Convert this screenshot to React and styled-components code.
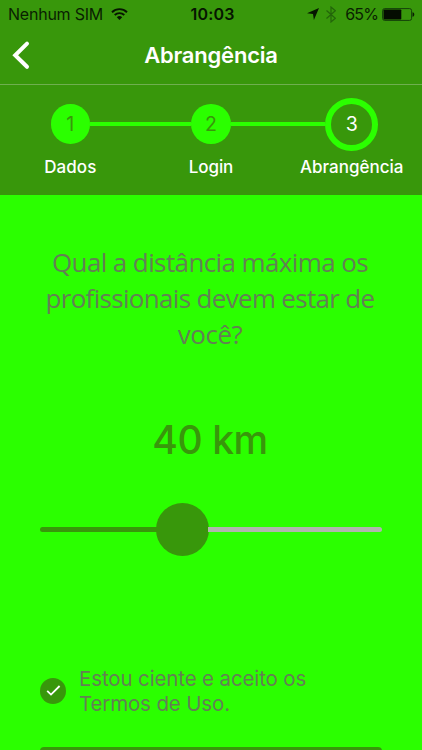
import React from "react";
import styled, { createGlobalStyle } from "styled-components";

const DARK = "#38970b";
const BRIGHT = "#2bff00";
const GREY = "#647f55";

const GlobalStyle = createGlobalStyle`
  * { box-sizing: border-box; }
  html, body { margin: 0; padding: 0; background: ${BRIGHT}; overflow: hidden; }
`;

const Screen = styled.div`
  width: 422px;
  height: 750px;
  overflow: hidden;
  display: flex;
  flex-direction: column;
  background: ${BRIGHT};
  font-family: Inter, "Liberation Sans", sans-serif;
`;

const StatusBar = styled.div`
  height: 28px;
  flex: none;
  display: grid;
  grid-template-columns: 1fr auto 1fr;
  align-items: center;
  padding: 0 7px 0 8px;
  background: ${DARK};
  color: #0a1f02;
  font-size: 16px;
  line-height: 28px;
  white-space: nowrap;
`;

const Carrier = styled.div`
  display: flex;
  align-items: center;
  gap: 8px;
  letter-spacing: -0.23px;
`;

const Clock = styled.div`
  padding-left: 2px;
  color: #061501;
  font-weight: 600;
  letter-spacing: 0.2px;
`;

const Indicators = styled.div`
  display: flex;
  align-items: center;
  justify-content: flex-end;
`;

const ArrowIcon = styled.svg`
  margin-right: 7px;
`;

const BluetoothIcon = styled.svg`
  margin-right: 9px;
`;

const Percent = styled.span`
  margin-right: 4px;
  letter-spacing: -0.9px;
`;

const NavBar = styled.header`
  height: 57px;
  flex: none;
  display: grid;
  grid-template-columns: 48px 1fr 48px;
  align-items: center;
  background: ${DARK};
  border-bottom: 1px solid #6faf50;
`;

const BackButton = styled.button`
  display: flex;
  padding: 0 0 2px 11px;
  border: 0;
  background: none;
`;

const Title = styled.h1`
  margin: 0 0 2px;
  color: #fff;
  text-align: center;
  font-size: 22px;
  font-weight: 600;
  line-height: 28px;
  letter-spacing: -0.2px;
`;

const Steps = styled.ol`
  height: 110px;
  flex: none;
  display: grid;
  grid-template-columns: repeat(3, 1fr);
  margin: 0;
  padding: 12px 0 0;
  list-style: none;
  background: ${DARK};
`;

const Step = styled.li`
  display: flex;
  flex-direction: column;
  align-items: center;
`;

const Marker = styled.div`
  width: 100%;
  height: 54px;
  display: grid;
  grid-template-columns: 1fr auto 1fr;
  align-items: center;
`;

const Rail = styled.span`
  height: 4px;
  background: ${({ $on }) => ($on ? BRIGHT : "transparent")};
`;

const Bubble = styled.span`
  width: ${({ $current }) => ($current ? 53 : 39.6)}px;
  height: ${({ $current }) => ($current ? 53 : 39.6)}px;
  display: flex;
  align-items: center;
  justify-content: center;
  border-radius: 50%;
  border: ${({ $current }) => ($current ? `6.5px solid ${BRIGHT}` : "0")};
  background: ${({ $current }) => ($current ? DARK : BRIGHT)};
  color: ${({ $current }) => ($current ? "#fff" : DARK)};
  font-size: 19.5px;
`;

const StepLabel = styled.span`
  margin-top: 5px;
  color: #fff;
  font-size: 17px;
  font-weight: 500;
  line-height: 22px;
  letter-spacing: ${({ $tracking }) => $tracking}px;
  white-space: nowrap;
`;

const Content = styled.main`
  display: flex;
  flex-direction: column;
  padding: 0 40px;
`;

const Question = styled.h2`
  margin: 49px -9px 0 -11px;
  color: ${GREY};
  text-align: center;
  font-family: "Open Sans", "Noto Sans", sans-serif;
  font-size: 26px;
  font-weight: 400;
  line-height: 36px;
`;

const QuestionLine = styled.span`
  display: block;
  white-space: nowrap;
  letter-spacing: ${({ $tracking }) => $tracking}px;
`;

const Distance = styled.output`
  margin: 63px 2px 0 0;
  color: ${DARK};
  text-align: center;
  font-size: 39px;
  font-weight: 500;
  line-height: 50px;
  letter-spacing: -0.4px;
`;

const Slider = styled.div`
  height: 53px;
  margin-top: 38px;
  display: flex;
  align-items: center;
`;

const Track = styled.span`
  width: ${({ $width }) => $width};
  flex: ${({ $width }) => ($width ? "none" : "1")};
  height: 5.5px;
  border-radius: ${({ $filled }) => ($filled ? "3px 0 0 3px" : "0 3px 3px 0")};
  background: ${({ $filled }) => ($filled ? DARK : "#b1b5ae")};
`;

const Thumb = styled.span`
  width: 53px;
  height: 53px;
  flex: none;
  margin: 0 -1px;
  border-radius: 50%;
  background: ${DARK};
`;

const Terms = styled.label`
  margin-top: 110px;
  display: flex;
  align-items: center;
  gap: 13px;
  color: ${GREY};
  font-size: 20.5px;
  line-height: 25px;
`;

const Check = styled.span`
  width: 26px;
  height: 26px;
  flex: none;
  display: flex;
  align-items: center;
  justify-content: center;
  border-radius: 50%;
  background: ${DARK};
`;

const TermsLine = styled.span`
  display: block;
  white-space: nowrap;
  letter-spacing: ${({ $tracking }) => $tracking}px;
`;

const Submit = styled.button`
  height: 50px;
  flex: none;
  margin-top: 31px;
  border: 0;
  border-radius: 4px;
  background: ${DARK};
`;

const steps = [
  { label: "Dados", tracking: 0.05 },
  { label: "Login", tracking: -0.1 },
  { label: "Abrangência", tracking: 0 },
];

export default function App() {
  const current = 2;
  return (
    <>
      <GlobalStyle />
      <Screen>
        <StatusBar>
          <Carrier>
            Nenhum SIM
            <svg width="17" height="12" viewBox="0 0 17 12" fill="none" stroke="#061501" strokeWidth="1.9">
              <path d="M1 4.2a10.8 10.8 0 0 1 15 0" />
              <path d="M3.7 7a7 7 0 0 1 9.6 0" />
              <path d="M8.5 12 5.8 9.2a3.9 3.9 0 0 1 5.4 0z" fill="#061501" stroke="none" />
            </svg>
          </Carrier>
          <Clock>10:03</Clock>
          <Indicators>
            <ArrowIcon width="12" height="12" viewBox="0 0 12 12" fill="#061501">
              <path d="M12 0 6.9 12 6 6 0 5.2z" />
            </ArrowIcon>
            <BluetoothIcon width="10" height="17" viewBox="0 0 10 17" fill="none" stroke="#23650a" strokeWidth="1.2">
              <path d="M0.5 4.5 9.3 12.3 5 16V1l4.3 3.7L0.5 12.5" />
            </BluetoothIcon>
            <Percent>65%</Percent>
            <svg width="33" height="13" viewBox="0 0 33 13">
              <rect x="0.6" y="0.6" width="29" height="11.8" rx="2" fill="none" stroke="#14400a" />
              <rect x="1.5" y="1.5" width="17.8" height="10" rx="0.8" fill="#040c01" />
              <path d="M30.5 4.3c2.4 0 2.4 4.4 0 4.4z" fill="#0a1f02" />
            </svg>
          </Indicators>
        </StatusBar>
        <NavBar>
          <BackButton aria-label="Voltar">
            <svg width="20" height="30" viewBox="0 0 20 30" fill="none" stroke="#fff" strokeWidth="4">
              <path d="M16 3.6 4.2 15.2 16 26.8" strokeLinecap="round" />
            </svg>
          </BackButton>
          <Title>Abrangência</Title>
        </NavBar>
        <Steps>
          {steps.map((step, i) => (
            <Step key={step.label}>
              <Marker>
                <Rail $on={i > 0} />
                <Bubble $current={i === current}>{i + 1}</Bubble>
                <Rail $on={i < current} />
              </Marker>
              <StepLabel $tracking={step.tracking}>{step.label}</StepLabel>
            </Step>
          ))}
        </Steps>
        <Content>
          <Question>
            <QuestionLine $tracking={-0.61}>Qual a distância máxima os</QuestionLine>
            <QuestionLine $tracking={-0.68}>profissionais devem estar de</QuestionLine>
            <QuestionLine $tracking={-0.5}>você?</QuestionLine>
          </Question>
          <Distance>40 km</Distance>
          <Slider>
            <Track $filled $width="116.7px" />
            <Thumb />
            <Track />
          </Slider>
          <Terms>
            <Check>
              <svg width="15" height="12" viewBox="0 0 15 12" fill="none" stroke="#fff" strokeWidth="1.8">
                <path d="M1.2 5.8 5 9.6 13.6 1" />
              </svg>
            </Check>
            <span>
              <TermsLine $tracking={-0.13}>Estou ciente e aceito os</TermsLine>
              <TermsLine $tracking={-0.15}>Termos de Uso.</TermsLine>
            </span>
          </Terms>
          <Submit aria-label="Continuar" />
        </Content>
      </Screen>
    </>
  );
}
